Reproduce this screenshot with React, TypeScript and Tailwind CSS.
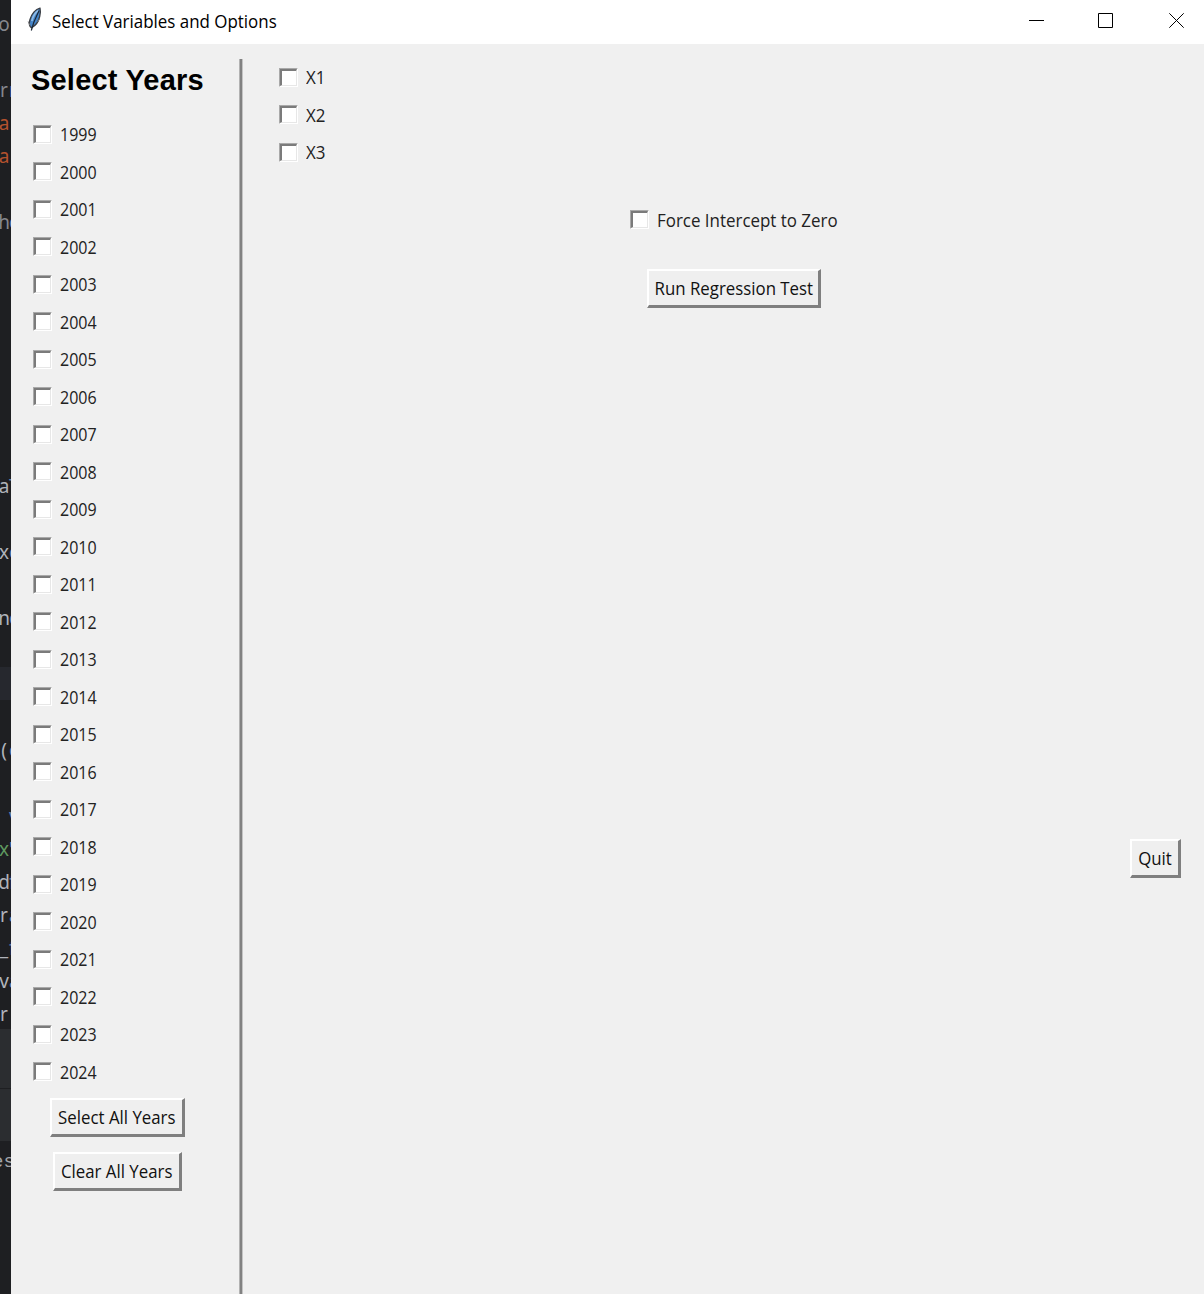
import React from "react";

type CodeLine = { text: string; next?: string; color?: string; active?: boolean };

const gray = "text-[#85878d]";
const orange = "text-[#b5522e]";
const light = "text-[#b0b3ba]";
const green = "text-[#5f9960]";

const codeLines: CodeLine[] = [
  { text: "o", color: gray },
  { text: "" },
  { text: "r", next: "r", color: gray },
  { text: "a", color: orange },
  { text: "a", color: orange },
  { text: "" },
  { text: "h", next: "e", color: gray },
  { text: "" },
  { text: "" },
  { text: "" },
  { text: "" },
  { text: "" },
  { text: "" },
  { text: "" },
  { text: "a", next: "T" },
  { text: "" },
  { text: "x", next: "e" },
  { text: "" },
  { text: "n", next: "e" },
  { text: "" },
  { text: "", active: true },
  { text: "" },
  { text: "(", next: "e" },
  { text: "" },
  { text: " ", next: "v", color: green },
  { text: "x", next: "'", color: green },
  { text: "d", next: "f" },
  { text: "r", next: "a" },
  { text: "_", next: "f" },
  { text: "v", next: "a" },
  { text: "r" },
];

const years = Array.from({ length: 26 }, (_, i) => 1999 + i);

function EditorStrip() {
  return (
    <div className="flex h-full w-[11px] shrink-0 flex-col overflow-hidden bg-[#1e1f22] pt-[7px] font-['Noto_Sans','DejaVu_Sans',sans-serif] text-[19px]">
      {codeLines.map((line, i) => (
        <div
          key={i}
          className={`flex h-[33px] w-[11px] shrink-0 overflow-hidden whitespace-pre pt-px leading-[33px] ${
            line.active ? "bg-[#26282e]" : ""
          } ${line.color ?? light}`}
        >
          <span className="-ml-[2px] flex w-[12px] shrink-0 justify-center">{line.text}</span>
          {line.next && <span className="-ml-px shrink-0 text-[#5d7fae]">{line.next}</span>}
        </div>
      ))}
      <div className="-mt-px h-[60px] shrink-0 border-b border-[#1e1f22] bg-[#2b2d30]" />
      <div className="h-[52px] shrink-0 bg-[#2b2d30]" />
      <div className="h-[38px] shrink-0 whitespace-pre pt-px font-['Liberation_Mono',monospace] text-[19px] leading-[40px] text-[#a3a5aa]">
        <span className="-ml-[8px]">es</span>
      </div>
    </div>
  );
}

function Feather() {
  return (
    <svg width="16" height="26" viewBox="0 0 16 26" fill="none">
      <path d="M13 1.2C8.500 2.200 4.500 7 3 12.500c-.9 3.200-.9 5.500.2 7l1.200 1.300C8 19 11.500 15 12.700 9.500c.7-3 .9-6 .3-8.300Z" fill="#4585c9" stroke="#3a3d42" strokeWidth="1.300" />
      <path d="M11.500 3.500C8.200 5.500 6 9 4.800 14" stroke="#8dbbe8" strokeWidth="1.700" />
      <path d="M12.200 3.500C9.500 9 6.500 14 4.300 23.500" stroke="#1b2735" strokeWidth="1.200" />
      <path d="M1.200 14.500 3 18.500M12.500 12l-2 3" stroke="#77797c" strokeWidth="1" />
    </svg>
  );
}

function TitleBar() {
  return (
    <div className="flex h-[44px] shrink-0 items-start bg-white pl-[16px]">
      <div className="mt-[7px] w-[25px]">
        <Feather />
      </div>
      <div className="mt-[8px] origin-left scale-x-[0.94] whitespace-nowrap font-['Open_Sans','Noto_Sans',sans-serif] text-[18px] leading-[27px] text-black">
        Select Variables and Options
      </div>
      <div className="mt-[13px] mr-[20px] ml-auto flex gap-[54px]">
        <svg width="15" height="15" viewBox="0 0 15 15" stroke="#000" fill="none">
          <path d="M0 7.500H15" />
        </svg>
        <svg width="15" height="15" viewBox="0 0 15 15" stroke="#000" fill="none">
          <path d="M.5 .5H14.500V14.500H.5Z" />
        </svg>
        <svg className="ml-[2px]" width="15" height="15" viewBox="0 0 15 15" stroke="#000" fill="none">
          <path d="M.3 .3 14.700 14.700M14.700 .3 .3 14.700" />
        </svg>
      </div>
    </div>
  );
}

function Check({ label, textClass }: { label: string | number; textClass: string }) {
  return (
    <label className="flex h-[37.5px] shrink-0 items-center">
      <span className="block size-[19px] shrink-0 border border-t-[#a9a9a9] border-l-[#a9a9a9] border-r-white border-b-white">
        <span className="block size-[17px] border-t-2 border-l-2 border-t-[#7b7b7b] border-l-[#7b7b7b] border-r border-b border-r-[#e7e7e7] border-b-[#e7e7e7] bg-white" />
      </span>
      <span
        className={`ml-[8px] origin-left whitespace-nowrap font-['Open_Sans','Noto_Sans',sans-serif] text-[18px] leading-[26px] text-[#222] ${textClass}`}
      >
        {label}
      </span>
    </label>
  );
}

function TkButton({ label, className }: { label: string; className: string }) {
  return (
    <button
      className={`flex h-[39px] shrink-0 items-center justify-center border-t-2 border-l-2 border-r-[3px] border-b-[3px] border-t-white border-l-white border-r-[#7f7f7f] border-b-[#7f7f7f] bg-[#efefef] font-['Open_Sans','Noto_Sans',sans-serif] text-[18px] leading-[26px] text-[#111] ${className}`}
    >
      <span className="block shrink-0 scale-x-[0.935] whitespace-nowrap">{label}</span>
    </button>
  );
}

export default function App() {
  return (
    <div className="flex h-[1294px] w-[1204px] overflow-hidden bg-[#1e1f22]">
      <EditorStrip />
      <div className="flex min-w-0 flex-1 flex-col bg-[#f0f0f0]">
        <TitleBar />
        <div className="flex min-h-0 flex-1">
          <div className="flex w-[228px] shrink-0 flex-col">
            <h1 className="mt-[17px] ml-[20px] h-[38px] whitespace-nowrap font-['Liberation_Sans',Arial,sans-serif] text-[29px] leading-[38px] font-bold tracking-[0.2px] text-black">
              Select Years
            </h1>
            <div className="mt-[16.500px] ml-[22px] flex flex-col">
              {years.map((year) => (
                <Check key={year} label={year} textClass="scale-x-[0.89]" />
              ))}
            </div>
            <TkButton label="Select All Years" className="mt-[7.500px] ml-[39px] w-[135px]" />
            <TkButton label="Clear All Years" className="mt-[15px] ml-[42px] w-[129px]" />
          </div>
          <div className="mt-[15px] w-[4px] shrink-0 border-r border-l border-r-[#c4c4c4] border-l-[#b2b2b2] bg-[#828282]" />
          <div className="flex flex-1 flex-col">
            <div className="mt-[14.500px] ml-[36px] flex flex-col">
              <Check label="X1" textClass="scale-x-[0.94]" />
              <Check label="X2" textClass="scale-x-[0.94]" />
              <Check label="X3" textClass="scale-x-[0.94]" />
            </div>
            <div className="mt-[30px] ml-[387px] flex">
              <Check label="Force Intercept to Zero" textClass="scale-x-[0.94]" />
            </div>
            <TkButton label="Run Regression Test" className="mt-[30.500px] ml-[404px] w-[174px]" />
            <TkButton label="Quit" className="mt-[531px] mr-[23px] ml-auto w-[51px]" />
          </div>
        </div>
      </div>
    </div>
  );
}
